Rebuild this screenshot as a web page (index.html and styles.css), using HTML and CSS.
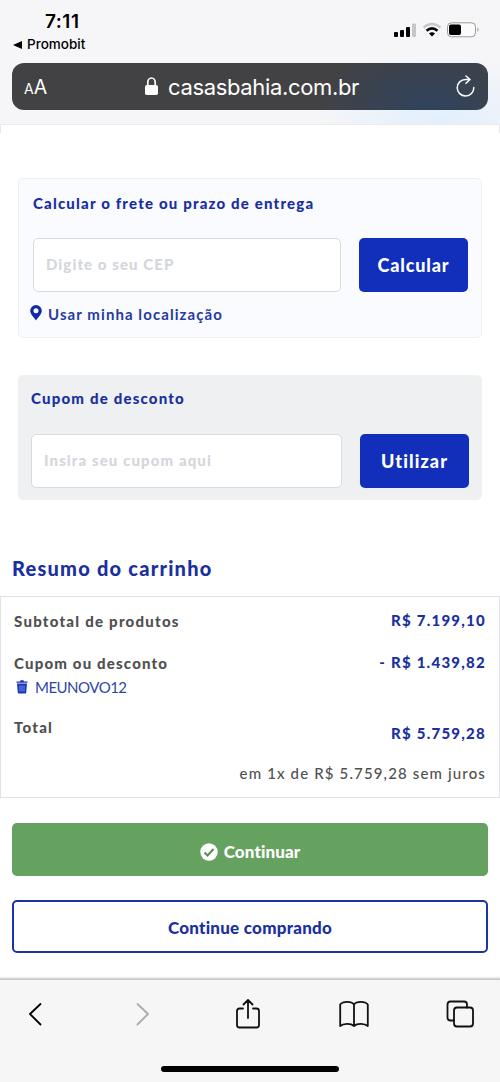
FILE: index.html
```html
<!DOCTYPE html>
<html lang="pt-BR">
<head>
<meta charset="utf-8">
<title>Carrinho</title>
<link rel="stylesheet" href="styles.css">
</head>
<body>
<header class="browser-top">
  <div class="status">
    <div class="status-left">
      <div class="clock">7:11</div>
      <div class="back-app"><svg width="9" height="8" viewBox="0 0 9 8"><path d="M0 4 9 0V8Z" fill="#000"/></svg><span class="app-name">Promobit</span></div>
    </div>
    <svg class="signals" width="88" height="18" viewBox="0 0 88 18">
      <rect x="1" y="10" width="4" height="5" rx="1"/><rect x="7" y="8" width="4" height="7" rx="1"/><rect x="13" y="5" width="4" height="10" rx="1"/><rect x="19" y="1.500" width="4" height="13.500" rx="1" fill="#c6c6c6"/>
      <g fill="none" stroke-width="2.500"><path d="M30.500 5.500Q39 -1.500 47.500 5.500" stroke="#c6c6c6"/><path d="M33.500 8.800Q39 4 44.500 8.800" stroke="#000"/></g><path d="M36 11.500Q39 9 42 11.500L39 14.500Z"/>
      <rect x="54.500" y=".8" width="28" height="14" rx="4" fill="#fbfbfb" stroke="#9a9a9a"/><rect x="56" y="2.500" width="12" height="10.600" rx="2"/><path d="M84.500 5.600Q86.500 7.800 84.500 10Z" fill="#888"/>
    </svg>
  </div>
  <div class="address">
    <div class="text-size"><span class="small-a">A</span><span class="big-a">A</span></div>
    <div class="site"><svg width="13" height="19" viewBox="0 0 13 19"><rect y="8" width="13" height="10" rx="1.800" fill="#fff"/><path d="M2.800 9V5.200a3.700 4.200 0 0 1 7.400 0V9" fill="none" stroke="#fff" stroke-width="1.700"/></svg><span class="domain">casasbahia.com.br</span></div>
    <svg class="reload" width="20" height="24" viewBox="0 0 20 24" fill="none" stroke="#fff" stroke-width="1.500" stroke-linecap="round" stroke-linejoin="round"><path d="M17.800 12.500a8.300 8.300 0 1 1-8.300-8.100H14M10 1l4 3.500-4 3.700"/></svg>
  </div>
</header>
<main class="page">
  <div class="previous-box"></div>
  <section class="card shipping">
    <h2 class="card-title">Calcular o frete ou prazo de entrega</h2>
    <div class="form-row"><div class="field">Digite o seu CEP</div><div class="submit">Calcular</div></div>
    <div class="location"><svg width="12" height="16" viewBox="0 0 12 16"><path fill="#142aa5" fill-rule="evenodd" d="M6 0a5.800 5.800 0 0 1 5.800 5.800C11.800 9 8 12.500 6 15.500 4 12.500.2 9 .2 5.800A5.800 5.800 0 0 1 6 0Zm0 3.300a2.500 2.500 0 1 0 0 5 2.500 2.500 0 0 0 0-5Z"/></svg><span class="location-label">Usar minha localização</span></div>
  </section>
  <section class="card coupon">
    <h2 class="card-title coupon-title">Cupom de desconto</h2>
    <div class="form-row"><div class="field coupon-field">Insira seu cupom aqui</div><div class="submit use">Utilizar</div></div>
  </section>
  <h1 class="summary-title">Resumo do carrinho</h1>
  <section class="summary">
    <div class="line subtotal"><span class="label subtotal-label">Subtotal de produtos</span><span class="price">R$ 7.199,10</span></div>
    <div class="line discount"><span class="label discount-label">Cupom ou desconto</span><span class="price minus">- R$ 1.439,82</span></div>
    <div class="code"><svg width="12" height="14" viewBox="0 0 12 14"><path d="M1 3.500h10l-.8 9.300q0 .7-1 .7H2.800q-.9 0-1-.7ZM.5 1.500H4L4.500.3h3L8 1.500h3.500v1.300H.5Z" fill="#1736bd"/><path d="M4 5.500v6M6 5.500v6M8 5.500v6" stroke="#a9b4e6" stroke-width=".7"/></svg><span class="code-name">MEUNOVO12</span></div>
    <div class="line total"><span class="label total-label">Total</span><span class="price total-price">R$ 5.759,28</span></div>
    <div class="installments">em 1x de R$ 5.759,28 sem juros</div>
  </section>
  <div class="action continue"><svg width="18" height="18" viewBox="0 0 18 18"><circle cx="9" cy="9" r="8.700" fill="#fff"/><path d="m4.500 9.500 3 3L13.500 6" fill="none" stroke="#5c8d59" stroke-width="2"/></svg><span class="continue-label">Continuar</span></div>
  <div class="action shop"><span class="shop-label">Continue comprando</span></div>
</main>
<footer class="browser-bottom">
  <nav class="tools">
    <svg width="14" height="24" viewBox="0 0 14 24"><path d="M12.500 2 2 12l10.500 10.500" stroke="#000"/></svg>
    <svg class="forward" width="14" height="24" viewBox="0 0 14 24"><path d="M1.500 2 12 12 1.500 22.500" stroke="#aaa"/></svg>
    <svg class="share" width="26" height="32" viewBox="0 0 26 32"><path d="M8 10.500H4.500Q2 10.500 2 13v14Q2 29.500 4.500 29.500h17q2.500 0 2.500-2.500V13Q24 10.500 21.500 10.500H18M13 20V2.500M8.500 6.500 13 2l4.500 4.500" stroke="#111"/></svg>
    <svg class="book" width="30" height="28" viewBox="0 0 30 28"><path d="M15 4.500C12.500 1 4 1 1.200 4.500V26c3-2.500 10.500-3 13.800 0 3.300-3 10.800-2.500 13.800 0V4.500C26 1 17.500 1 15 4.500V26" stroke="#111"/></svg>
    <svg class="tabs" width="28" height="28" viewBox="0 0 28 28"><rect x="8" y="7.500" width="19" height="19" rx="3" stroke="#111"/><path d="M8 20.500H4.500q-3 0-3-3v-13q0-3 3-3h13.500q3 0 3 3v3" stroke="#111"/></svg>
  </nav>
  <div class="home-indicator"></div>
</footer>
</body>
</html>
```
FILE: styles.css
```css
* { box-sizing: border-box; }
body { margin: 0; width: 500px; height: 1082px; overflow: hidden; display: flex; flex-direction: column; background: #fff; font-family: Lato, "Open Sans", sans-serif; font-variant-ligatures: none; }
svg { flex: none; display: block; }
h1, h2 { margin: 0; }
span, div { white-space: nowrap; }

.browser-top { height: 125px; flex: none; padding: 10px 12px 0; border-bottom: 1px solid #ebebed; background: radial-gradient(ellipse 130px 75px at 88% 100%, #e1effc 0, rgba(235,243,252,0) 100%), #f6f6f8; }
.status { height: 53px; display: flex; justify-content: space-between; font-family: Inter, sans-serif; color: #000; }
.clock { padding-left: 33px; font-size: 19px; font-weight: 600; line-height: 24px; letter-spacing: .5px; }
.back-app { display: flex; align-items: center; gap: 5px; padding-left: 1px; font-size: 13.500px; font-weight: 500; line-height: 21px; }
.signals { margin: 12px 7px 0 0; }
.address { height: 47px; padding: 0 12px; border-radius: 12px; display: flex; align-items: center; color: #fff; background: radial-gradient(ellipse 115px 75px at 88% 100%, #30435e 0, rgba(48,67,94,0) 100%), #424244; font-family: Inter, sans-serif; }
.text-size { width: 46px; line-height: 24px; padding-top: 2px; }
.small-a { font-size: 14px; }
.big-a { font-size: 19.500px; }
.site { display: flex; align-items: center; gap: 10px; margin-left: 75px; }
.domain { font-size: 22px; line-height: 30px; letter-spacing: -.35px; }
.reload { margin-left: auto; }

.page { height: 855px; flex: none; }
.previous-box { height: 8px; border: solid #e5e7eb; border-width: 0 1px; }
.card { margin: 45px 18px 0; border-radius: 5px; }
.shipping { height: 160px; padding: 12px 13px 0 14px; border: 1px solid #eceff4; background: #f9fbff; }
.card-title { font-size: 15px; line-height: 24px; font-weight: 900; color: #192f9f; letter-spacing: 1.180px; }
.coupon-title { letter-spacing: 1.200px; }
.form-row { display: flex; justify-content: space-between; margin-top: 23px; }
.field { width: 308px; height: 54px; padding: 0 12px; border: 1px solid #d8dade; border-radius: 5px; background: #fff; color: #d4d6dc; font-size: 15px; font-weight: 900; line-height: 51px; letter-spacing: 1.080px; }
.submit { width: 109px; height: 54px; border-radius: 5px; background: #112fbb; color: #fff; font-size: 18px; font-weight: 900; line-height: 54px; text-align: center; letter-spacing: .85px; }
.location { display: flex; gap: 6px; margin: 11px 0 0 -3px; height: 22px; align-items: center; color: #263b9f; font-size: 15px; font-weight: 700; letter-spacing: 1.080px; }
.location svg { margin-bottom: 3px; }
.coupon { height: 125px; margin-top: 37px; padding: 11px 13px 0; background: #eef0f2; }
.coupon .form-row { margin-top: 24px; }
.coupon-field { width: 311px; letter-spacing: 1.100px; }
.use { letter-spacing: 1.100px; }
.summary-title { height: 96px; padding: 55px 0 0 12px; font-size: 20px; line-height: 26px; font-weight: 900; color: #1b309f; letter-spacing: 1.220px; }
.summary { height: 202px; border: 1px solid #e0e2e5; padding: 12px 14px 0 13px; color: #505050; }
.line { display: flex; justify-content: space-between; height: 22px; line-height: 22px; font-size: 15px; font-weight: 900; }
.label { letter-spacing: 1.250px; padding-top: 1px; }
.discount-label { letter-spacing: 1.180px; }
.price { color: #1b309f; letter-spacing: 1.250px; margin-right: -1px; }
.discount { margin-top: 20px; }
.code { display: flex; align-items: center; gap: 7px; padding-left: 2px; height: 22px; margin-top: 3px; font-size: 15px; line-height: 22px; color: #3045aa; }
.code-name { letter-spacing: -.5px; }
.total { margin-top: 17px; }
.total-price { padding-top: 7px; }
.installments { margin-top: 25px; margin-right: -1px; text-align: right; font-size: 15px; line-height: 22px; letter-spacing: 1.140px; font-weight: 500; }
.action { height: 53px; margin: 25px 12px 0; border-radius: 5px; display: flex; align-items: center; justify-content: center; gap: 6px; font-size: 17px; font-weight: 900; letter-spacing: .1px; }
.continue { background: #65a260; color: #fff; padding-top: 4px; }
.shop { margin-top: 24px; border: 2px solid #1a34a2; color: #1b309f; padding-top: 2px; letter-spacing: .25px; }

.browser-bottom { height: 102px; flex: none; background: #f6f6f6; box-shadow: 0 -1px 2px 1px #c4c4c4; padding-top: 18px; }
.tools { height: 32px; display: flex; align-items: center; padding-left: 28px; fill: none; stroke-width: 1.800; stroke-linecap: round; stroke-linejoin: round; }
.forward { margin-left: 94px; }
.share { margin-left: 85px; }
.book { margin-left: 78px; }
.tabs { margin-left: 77px; }
.home-indicator { width: 178px; height: 6px; border-radius: 3px; background: #000; margin: 36px auto 0; }
```
